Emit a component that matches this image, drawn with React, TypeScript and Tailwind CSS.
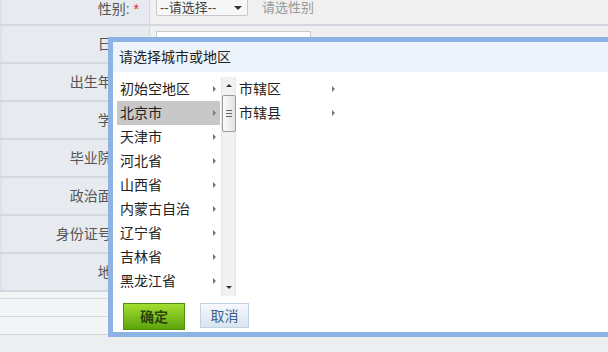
import React from "react";

const labels = ["日期", "出生年月", "学历", "毕业院校", "政治面貌", "身份证号码", "地址"];

const provinces = ["初始空地区", "北京市", "天津市", "河北省", "山西省", "内蒙古自治", "辽宁省", "吉林省", "黑龙江省", "上海市"];

const districts = ["市辖区", "市辖县"];

function Arrow() {
    return <span className="h-0 w-0 border-y-[3px] border-l-[3px] border-y-transparent border-l-[#777]" />;
}

function Label({ text }: { text: string }) {
    return (
        <div className="flex w-[150px] shrink-0 items-center justify-end self-stretch border-l-2 border-r border-l-[#dce2e8] border-r-[#d3d9df] bg-[#e7ebef] pr-[10px] text-[14px] text-[#555]">
            {text}: <span className="ml-[4px] text-[#d22]">*</span>
        </div>
    );
}

function Scrollbar() {
    return (
        <div className="ml-[1px] flex h-[219px] w-[15px] flex-col items-center border-x border-[#e6e6e6] bg-[#f1f1f1]">
            <div className="flex h-[17px] w-full items-center justify-center">
                <span className="h-0 w-0 border-x-[3px] border-b-[3px] border-x-transparent border-b-[#333]" />
            </div>
            <div className="mt-[1px] flex h-[37px] w-[14px] flex-col items-center justify-center gap-[2px] rounded-[2px] border border-[#9c9c9c] bg-gradient-to-r from-[#fbfbfb] to-[#e2e2e2]">
                <span className="h-px w-[6px] bg-[#666]" />
                <span className="h-px w-[6px] bg-[#666]" />
                <span className="h-px w-[6px] bg-[#666]" />
            </div>
            <div className="flex-1" />
            <div className="flex h-[17px] w-full items-center justify-center">
                <span className="h-0 w-0 border-x-[3px] border-t-[3px] border-x-transparent border-t-[#333]" />
            </div>
        </div>
    );
}

export default function App() {
    return (
        <div className="relative h-[352px] w-[608px] overflow-hidden bg-[#eceeef] font-['Liberation_Sans','Noto_Sans_CJK_SC',sans-serif]">
            {/* form behind the dialog */}
            <div className="flex flex-col">
                <div className="flex h-[26px] border-b-2 border-[#d2d8de] bg-[#f0f0f0]">
                    <div className="flex w-[150px] shrink-0 justify-end border-l-2 border-r border-l-[#dce2e8] border-r-[#d3d9df] bg-[#e7ebef] pr-[10px] pt-[1px] text-[14px] leading-[16px] text-[#555]">
                        性别: <span className="ml-[4px] text-[#d22]">*</span>
                    </div>
                    <div className="flex items-start pl-[6px]">
                        <div className="flex h-[16px] w-[92px] items-center justify-between rounded-b-[2px] border border-t-0 border-[#c9c9c9] bg-[#f7f7f7] pl-[3px] pr-[5px] text-[13px] text-[#444]">
                            --请选择--
                            <span className="h-0 w-0 border-x-[4px] border-t-[4px] border-x-transparent border-t-[#333]" />
                        </div>
                        <span className="ml-[14px] text-[13px] leading-[15px] text-[#999]">请选性别</span>
                    </div>
                </div>
                {labels.map((label, i) => (
                    <div key={label} className="flex h-[38px] border-b-2 border-[#d2d8de] bg-[#f0f0f0]">
                        <Label text={label} />
                        {i === 0 ? (
                            <div className="flex items-start pl-[6px] pt-[5px]">
                                <div className="h-[24px] w-[155px] border border-[#c9c9c9] bg-white" />
                                <span className="ml-[10px] mt-[4px] text-[13px] text-[#999]">请选择日期</span>
                            </div>
                        ) : null}
                    </div>
                ))}
                <div className="h-[7px] border-b border-[#d6dadd] bg-[#f3f4f5]" />
                <div className="h-[18px] border-b border-[#d6dadd] bg-[#f3f4f5]" />
                <div className="h-[18px] border-b border-[#d3d7da] bg-[#f3f4f5]" />
            </div>

            {/* city picker dialog */}
            <div className="absolute left-[108px] top-[37px] flex h-[300px] w-[520px] flex-col border-[5px] border-[#8cb3e3] bg-white">
                <div className="flex h-[30px] items-center bg-[#eef4fb] pl-[6px] text-[14px] text-[#222]">
                    请选择城市或地区
                </div>
                <div className="flex pl-[4px] pt-[5px]">
                    <div className="h-[219px] w-[103px] overflow-hidden">
                        {provinces.map((name, i) => (
                            <div
                                key={name}
                                className={`flex h-[24px] items-center justify-between pl-[3px] pr-[4px] text-[14px] text-[#222] ${i === 1 ? "bg-[#c8c8c8]" : ""}`}
                            >
                                {name}
                                <Arrow />
                            </div>
                        ))}
                    </div>
                    <Scrollbar />
                    <div className="ml-[3px] w-[100px]">
                        {districts.map((name) => (
                            <div key={name} className="flex h-[24px] items-center justify-between pr-[4px] text-[14px] text-[#222]">
                                {name}
                                <Arrow />
                            </div>
                        ))}
                    </div>
                </div>
                <div className="flex items-start pl-[10px] pt-[7px]">
                    <button
                        type="button"
                        className="flex h-[27px] w-[62px] items-center justify-center border border-[#4f8f0e] bg-gradient-to-b from-[#a2de30] to-[#5da40b] text-[14px] font-bold leading-[18px] text-[#2c4510]"
                    >
                        确定
                    </button>
                    <button
                        type="button"
                        className="ml-[15px] flex h-[25px] w-[49px] items-center justify-center border border-[#c3d2e3] bg-gradient-to-b from-[#f6f9fd] to-[#d9e4f0] text-[14px] leading-[18px] text-[#3d5f8c]"
                    >
                        取消
                    </button>
                </div>
            </div>
        </div>
    );
}
